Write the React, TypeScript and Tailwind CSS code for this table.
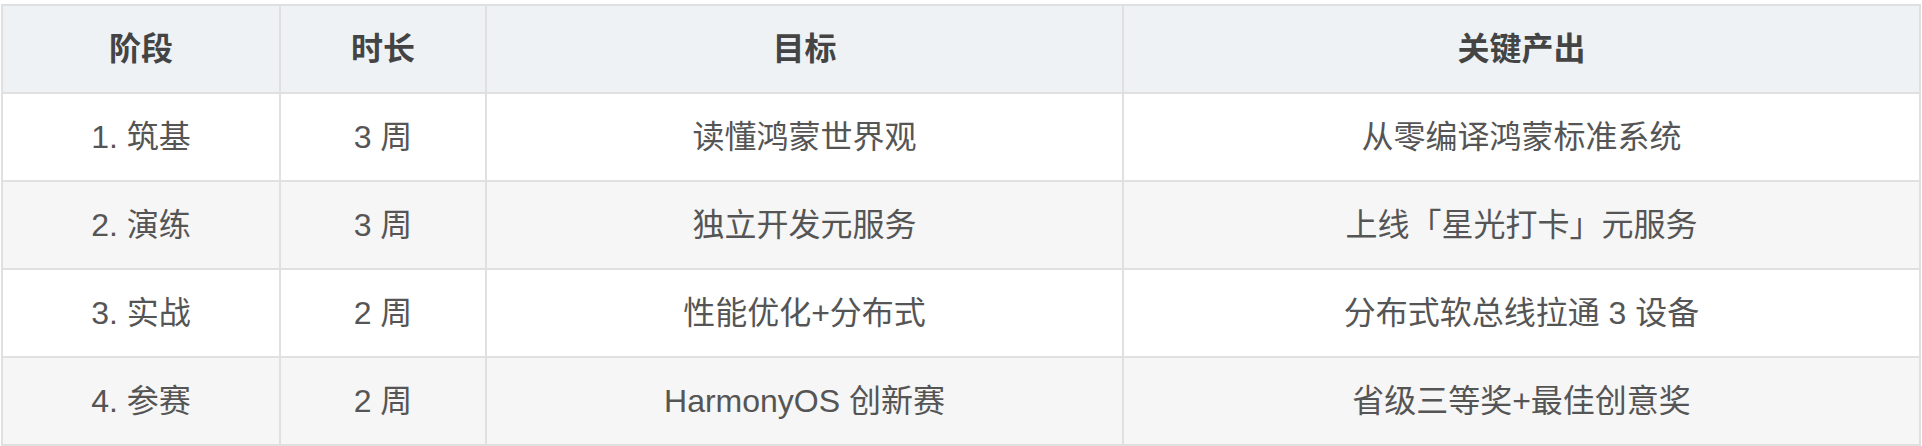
const head = ["阶段", "时长", "目标", "关键产出"];

const rows = [
  ["1. 筑基", "3 周", "读懂鸿蒙世界观", "从零编译鸿蒙标准系统"],
  ["2. 演练", "3 周", "独立开发元服务", "上线「星光打卡」元服务"],
  ["3. 实战", "2 周", "性能优化+分布式", "分布式软总线拉通 3 设备"],
  ["4. 参赛", "2 周", "HarmonyOS 创新赛", "省级三等奖+最佳创意奖"],
];

export default function App() {
  return (
    <div className="pl-px pt-1 bg-white">
      <div
        className="grid w-[1920px] grid-cols-[276px_204px_635px_795px] gap-[2px] bg-[#e0e0e0] p-[2px] text-[32px]"
        style={{ fontFamily: '"Liberation Sans", "Noto Sans CJK SC", sans-serif' }}
      >
        {head.map((h) => (
          <div
            key={h}
            className="flex h-[86px] items-center justify-center bg-[#eef2f5] font-semibold text-[#444444]"
          >
            {h}
          </div>
        ))}
        {rows.map((r, i) =>
          r.map((c, j) => (
            <div
              key={i + "-" + j}
              className={
                "flex h-[86px] items-center justify-center text-[#555555] " +
                (i % 2 === 1 ? "bg-[#f6f6f6]" : "bg-white")
              }
            >
              {c}
            </div>
          ))
        )}
      </div>
    </div>
  );
}
